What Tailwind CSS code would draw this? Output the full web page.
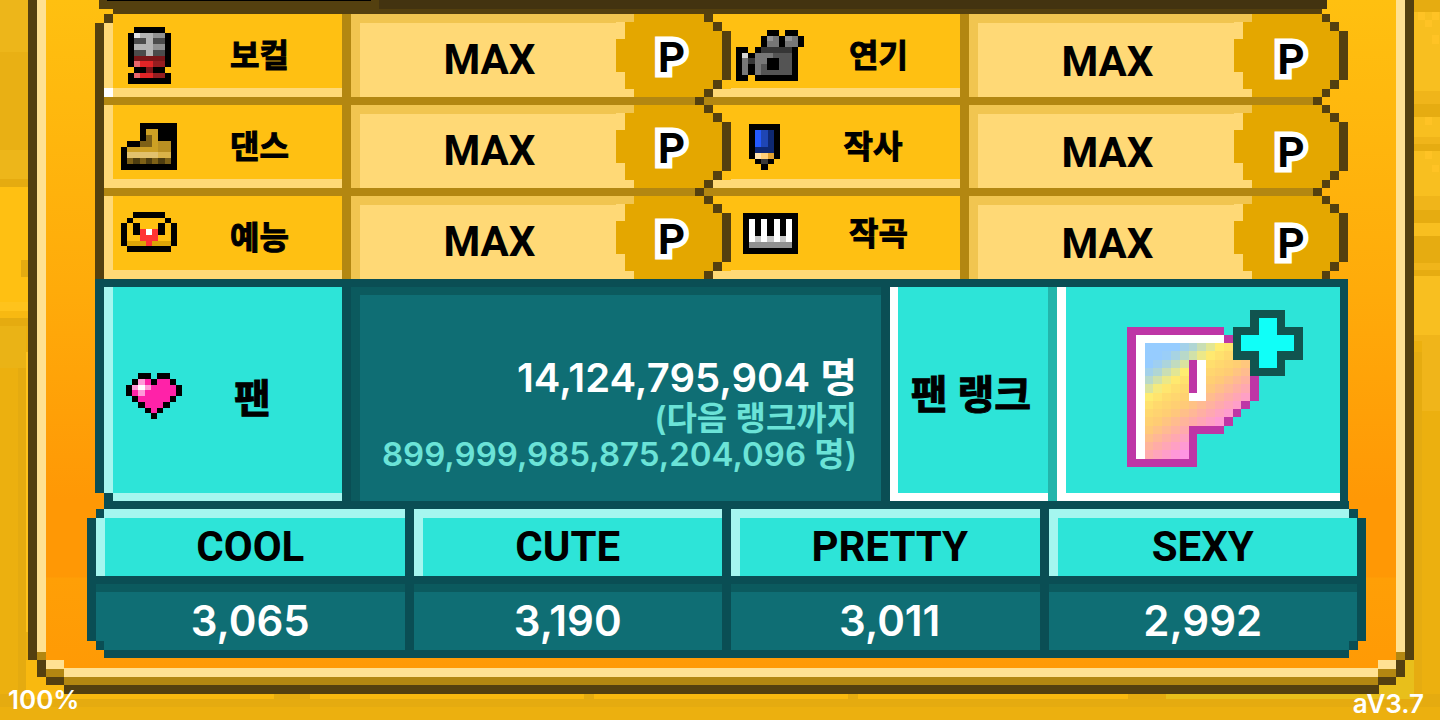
<!DOCTYPE html>
<html lang="ko">
<head>
<meta charset="utf-8">
<meta name="viewport" content="width=device-width, initial-scale=1">
<title>아이돌 스탯</title>
<script src="https://cdn.jsdelivr.net/npm/@tailwindcss/browser@4"></script>
</head>
<body class="relative min-h-screen overflow-x-hidden bg-[#ecb00f] font-[Roboto,'Noto_Sans_CJK_KR',sans-serif] font-bold text-black">

<!-- Brick backdrop -->
<div class="absolute inset-0 overflow-hidden" aria-hidden="true">
  <div class="absolute inset-x-0 top-[694px] h-[13px] bg-[#e5ab10]"></div>
  <div class="absolute inset-x-[26px] top-[660px] h-[39px] bg-[#f9b90f]"></div>
  <div class="absolute right-[26px] top-[660px] h-[39px] w-[248px] bg-[#e8bf1b]"></div>
  <svg class="absolute left-0 top-0" width="1440" height="720" shape-rendering="crispEdges">
    <path fill="#edb61a" d="M0 0h28v52H0zM0 150h28v29H0z"/>
    <path fill="#e9b014" d="M0 52h28v98H0z"/>
    <path fill="#edb61a" d="M7 151h7v7H7zM21 151h7v7h-7zM14 158h7v6h-7z"/>
    <path fill="#e5ab10" d="M0 179h28v8H0zM0 318h28v8H0zM18 350h8v349h-8zM274 694h36v8h-36zM584 694h10v8h-10zM848 694h10v8h-10zM1128 694h38v8h-38z"/>
    <path fill="#ffc012" d="M0 187h28v115H0z"/>
    <path fill="#e5ab10" d="M21 260h7v17h-7z"/>
    <path fill="#ffc31c" d="M0 302h28v9H0zM26 352h2v280h-2z"/>
    <path fill="#f8b912" d="M0 311h28v7H0z"/>
    <path fill="#eab316" d="M0 326h26v42H0z"/>
  </svg>
  <svg class="absolute right-0 top-0" width="26" height="720" shape-rendering="crispEdges">
    <path fill="#f8bf20" d="M0 0h26v341H0z"/>
    <path fill="#f0b51a" d="M0 91h26v13H0zM0 137h26v7H0zM0 196h26v14H0zM0 263h26v8H0zM0 335h26v6H0zM8 341h18v70H8z"/>
    <path fill="#e6ac11" d="M0 0h26v12H0zM0 104h26v13H0zM0 144h26v7H0zM0 210h26v13H0zM0 236h26v27H0zM0 270h26v6H0zM0 352h8v347H0z"/>
    <path fill="#ffc325" d="M4 12h7v8H4zM18 12h7v8h-7zM11 20h7v7h-7zM18 35h7v9h-7zM11 117h7v8h-7zM11 151h7v8h-7zM18 165h7v7h-7z"/>
  </svg>
</div>

<!-- Gold frame -->
<main class="relative ml-7 mr-[26px] border-x-[9px] border-b-[9px] border-[#54400f] bg-[#54400f] [clip-path:polygon(0_0,100%_0,100%_calc(100%-34px),calc(100%-9px)_calc(100%-34px),calc(100%-9px)_calc(100%-17px),calc(100%-18px)_calc(100%-17px),calc(100%-18px)_calc(100%-9px),calc(100%-35px)_calc(100%-9px),calc(100%-35px)_100%,36px_100%,36px_calc(100%-9px),18px_calc(100%-9px),18px_calc(100%-17px),9px_calc(100%-17px),9px_calc(100%-34px),0_calc(100%-34px))]">
  <div class="border-b-8 border-[#b38711]">
    <div class="border-x-[9px] border-b-[9px] border-[#ffe192] bg-[linear-gradient(#ffc010_0px,#ffab0a_290px,#ff9805_500px,#ff9805_577px,#ff9f06_578px,#ff9a05_100%)] pb-[10px]">

      <!-- Lower edge of the panel above -->
      <div class="ml-[53px] mr-[69px] flex h-[9px]">
        <div class="w-[280px] bg-[#54400f] px-2"><div class="h-px bg-black"></div></div>
        <div class="flex-1 bg-[#433310]"></div>
      </div>
      <div class="ml-[67px] mr-[74px] h-[5px] bg-[#54400f]"></div>

      <!-- Skills -->
      <section class="relative ml-[49px] mr-[48px] grid grid-cols-[627fr_617fr] border-l-[9px] border-[#54400f] [clip-path:polygon(9px_0,100%_0,100%_100%,0_100%,0_9px,9px_9px)]">
        <span class="absolute left-0 top-0 z-10 size-[9px] bg-[#54400f]"></span>
        <span class="absolute left-0 top-[74px] z-10 size-[9px] bg-white"></span>

        <div class="flex flex-col">
          <div class="grid h-[83px] grid-cols-[238fr_9px_265fr_115px]">
            <div class="flex items-center bg-[#ffc012] pl-[9px] pr-2 shadow-[inset_9px_0_#ffd976,inset_0_-9px_#ffd976]">
              <div class="flex w-[72px] justify-center"><svg data-sprite="mic" class="h-[57px] w-[43px]"></svg></div>
              <h2 class="flex-1 text-center text-[32px] leading-9 [-webkit-text-stroke:1px_black]">보컬</h2>
            </div>
            <div class="bg-[#b38711]"></div>
            <div class="flex items-center justify-center bg-[#ffd976] pl-3 pt-2 text-[42px] shadow-[inset_9px_9px_#f1c550]">MAX</div>
            <div class="grid place-items-center bg-[#ffc012]"><svg data-seal="inner" class="col-start-1 row-start-1 h-[83px] w-[115px]"></svg><span class="col-start-1 row-start-1 pr-1 pt-1 text-[42px] [-webkit-text-stroke:11px_white] [paint-order:stroke_fill] [stroke-linejoin:round]">P</span></div>
          </div>
          <div class="flex h-2 bg-[#b38711]"><div class="flex-1"></div><div class="mr-[27px] w-[9px] bg-[#54400f]"></div></div>
          <div class="grid h-[83px] grid-cols-[238fr_9px_265fr_115px]">
            <div class="flex items-center bg-[#ffc012] pl-[9px] pr-2 shadow-[inset_9px_0_#ffd976,inset_0_-9px_#ffd976]">
              <div class="flex w-[72px] justify-center"><svg data-sprite="shoe" class="h-[47px] w-[56px]"></svg></div>
              <h2 class="flex-1 text-center text-[32px] leading-9 [-webkit-text-stroke:1px_black]">댄스</h2>
            </div>
            <div class="bg-[#b38711]"></div>
            <div class="flex items-center justify-center bg-[#ffd976] pl-3 pt-2 text-[42px] shadow-[inset_9px_9px_#f1c550]">MAX</div>
            <div class="grid place-items-center bg-[#ffc012]"><svg data-seal="inner" class="col-start-1 row-start-1 h-[83px] w-[115px]"></svg><span class="col-start-1 row-start-1 pr-1 pt-1 text-[42px] [-webkit-text-stroke:11px_white] [paint-order:stroke_fill] [stroke-linejoin:round]">P</span></div>
          </div>
          <div class="flex h-2 bg-[#b38711]"><div class="flex-1"></div><div class="mr-[27px] w-[9px] bg-[#54400f]"></div></div>
          <div class="grid h-[83px] grid-cols-[238fr_9px_265fr_115px]">
            <div class="flex items-center bg-[#ffc012] pl-[9px] pr-2 shadow-[inset_9px_0_#ffd976,inset_0_-9px_#ffd976]">
              <div class="flex w-[72px] justify-center pb-3"><svg data-sprite="face" class="h-[40px] w-[56px]"></svg></div>
              <h2 class="flex-1 text-center text-[32px] leading-9 [-webkit-text-stroke:1px_black]">예능</h2>
            </div>
            <div class="bg-[#b38711]"></div>
            <div class="flex items-center justify-center bg-[#ffd976] pl-3 pt-2 text-[42px] shadow-[inset_9px_9px_#f1c550]">MAX</div>
            <div class="grid place-items-center bg-[#ffc012]"><svg data-seal="inner" class="col-start-1 row-start-1 h-[83px] w-[115px]"></svg><span class="col-start-1 row-start-1 pr-1 pt-1 text-[42px] [-webkit-text-stroke:11px_white] [paint-order:stroke_fill] [stroke-linejoin:round]">P</span></div>
          </div>
        </div>

        <div class="flex flex-col">
          <div class="grid h-[83px] grid-cols-[229fr_9px_265fr_114px]">
            <div class="flex items-center bg-[#ffc012] pr-3 shadow-[inset_0_-9px_#ffd976]">
              <div class="flex w-[78px] justify-center"><svg data-sprite="camera" class="h-[51px] w-[68px]"></svg></div>
              <h2 class="flex-1 text-center text-[32px] leading-9 [-webkit-text-stroke:1px_black]">연기</h2>
            </div>
            <div class="bg-[#b38711]"></div>
            <div class="flex items-center justify-center bg-[#ffd976] pl-3 pt-3 text-[42px] shadow-[inset_9px_9px_#f1c550]">MAX</div>
            <div class="grid place-items-center"><svg data-seal="outer" class="col-start-1 row-start-1 h-[83px] w-[114px]"></svg><span class="col-start-1 row-start-1 pt-2 text-[42px] [-webkit-text-stroke:11px_white] [paint-order:stroke_fill] [stroke-linejoin:round]">P</span></div>
          </div>
          <div class="flex h-2"><div class="flex-1 bg-[#b38711]"></div><div class="mr-[26px] w-[9px] bg-[#54400f]"></div></div>
          <div class="grid h-[83px] grid-cols-[229fr_9px_265fr_114px]">
            <div class="flex items-center bg-[#ffc012] pr-3 shadow-[inset_0_-9px_#ffd976]">
              <div class="flex w-[67px] justify-center"><svg data-sprite="pencil" class="h-[46px] w-[31px]"></svg></div>
              <h2 class="flex-1 text-center text-[32px] leading-9 [-webkit-text-stroke:1px_black]">작사</h2>
            </div>
            <div class="bg-[#b38711]"></div>
            <div class="flex items-center justify-center bg-[#ffd976] pl-3 pt-3 text-[42px] shadow-[inset_9px_9px_#f1c550]">MAX</div>
            <div class="grid place-items-center"><svg data-seal="outer" class="col-start-1 row-start-1 h-[83px] w-[114px]"></svg><span class="col-start-1 row-start-1 pt-3 text-[42px] [-webkit-text-stroke:11px_white] [paint-order:stroke_fill] [stroke-linejoin:round]">P</span></div>
          </div>
          <div class="flex h-2"><div class="flex-1 bg-[#b38711]"></div><div class="mr-[26px] w-[9px] bg-[#54400f]"></div></div>
          <div class="grid h-[83px] grid-cols-[229fr_9px_265fr_114px]">
            <div class="flex items-center bg-[#ffc012] pb-2 pr-3 shadow-[inset_0_-9px_#ffd976]">
              <div class="flex w-[78px] justify-center"><svg data-sprite="piano" class="h-[41px] w-[55px]"></svg></div>
              <h2 class="flex-1 text-center text-[32px] leading-9 [-webkit-text-stroke:1px_black]">작곡</h2>
            </div>
            <div class="bg-[#b38711]"></div>
            <div class="flex items-center justify-center bg-[#ffd976] pl-3 pt-3 text-[42px] shadow-[inset_9px_9px_#f1c550]">MAX</div>
            <div class="grid place-items-center"><svg data-seal="outer" class="col-start-1 row-start-1 h-[83px] w-[114px]"></svg><span class="col-start-1 row-start-1 pt-3 text-[42px] [-webkit-text-stroke:11px_white] [paint-order:stroke_fill] [stroke-linejoin:round]">P</span></div>
          </div>
        </div>
      </section>

      <!-- Fans -->
      <section class="relative ml-[49px] mr-[48px] grid min-h-[222px] grid-cols-[238fr_9px_530fr_9px_158fr_9px_283fr] border-l-[9px] border-r-8 border-t-8 border-[#0a4e54] bg-[#0a4e54] [clip-path:polygon(0_0,100%_0,100%_100%,9px_100%,9px_calc(100%-8px),0_calc(100%-8px))]">
        <span class="absolute bottom-0 left-0 z-10 h-2 w-[9px] bg-[#0a4e54]"></span>
        <div class="flex items-center bg-[#2de4d8] pl-[9px] pr-8 pt-1 shadow-[inset_9px_0_#a5f6ef,inset_0_-8px_#a5f6ef]">
          <div class="flex w-[82px] justify-center"><svg data-sprite="heart" class="h-[46px] w-[56px]"></svg></div>
          <h2 class="flex-1 pt-2 text-center text-[40px] [-webkit-text-stroke:1px_black]">팬</h2>
        </div>
        <div></div>
        <div class="flex flex-col items-end justify-center bg-[#0f6e74] pr-6 pt-10 text-right font-[Inter,'Noto_Sans_CJK_KR',sans-serif] font-semibold shadow-[inset_9px_8px_#0b5a5e]">
          <p class="text-[40px] leading-11 text-white">14,124,795,904 명</p>
          <p class="text-[33px] leading-9 text-[#6be3d7]">(다음 랭크까지<br>899,999,985,875,204,096 명)</p>
        </div>
        <div></div>
        <h2 class="flex items-center justify-center border-l-8 border-white bg-[#2de4d8] pr-1 pt-1 text-[40px] whitespace-nowrap shadow-[inset_0_-8px_white] [-webkit-text-stroke:1px_black]">팬 랭크</h2>
        <div class="bg-[#23b5ab]"></div>
        <div class="flex items-center justify-center border-l-[9px] border-white bg-[#2de4d8] pb-3 pl-6 shadow-[inset_0_-8px_white]">
          <button type="button" aria-label="팬 랭크 P+" class="cursor-pointer">
            <svg id="rank" class="h-[157px] w-[176px]" viewBox="0 0 20 19" preserveAspectRatio="none" shape-rendering="crispEdges">
              <path fill="#be36a6" d="M0 2h11v1h1v1h3v7h-1v1h-1v1h-1v1h-1v1H8v4H0z"/>
              <path fill="#fff" d="M1 3h10v1H2v14H1z"/>
              <g id="rank-shine"></g>
              <path fill="#fff" d="M8 6h1v5H7v-1h1z"/>
              <path fill="#be36a6" d="M7 6h1v4H7z"/>
              <path fill="#11544f" d="M14 0h4v2h2v4h-2v2h-4V6h-2V2h2z"/>
              <path fill="#10fff8" d="M15 1h2v2h2v2h-2v2h-2V5h-2V3h2z"/>
            </svg>
          </button>
        </div>
      </section>

      <!-- Charm stats -->
      <section class="relative ml-[41px] mr-[30px] bg-[#0a4e54] [clip-path:polygon(17px_0,calc(100%-17px)_0,calc(100%-17px)_8px,calc(100%-8px)_8px,calc(100%-8px)_17px,100%_17px,100%_calc(100%-17px),calc(100%-8px)_calc(100%-17px),calc(100%-8px)_calc(100%-8px),calc(100%-17px)_calc(100%-8px),calc(100%-17px)_100%,17px_100%,17px_calc(100%-8px),9px_calc(100%-8px),9px_calc(100%-17px),0_calc(100%-17px),0_17px,9px_17px,9px_8px,17px_8px)]">
        <table class="w-full table-fixed border-separate border-spacing-x-[9px] border-spacing-y-2 text-center text-[42px] leading-none">
          <thead>
            <tr class="h-[67px] bg-[#2de4d8]">
              <th scope="col" class="border-l-[9px] border-t-[9px] border-[#a5f6ef] bg-[#2de4d8] py-0 pl-0 pr-[9px]">COOL</th>
              <th scope="col" class="border-l-[9px] border-t-[9px] border-[#a5f6ef] bg-[#2de4d8] py-0 pl-0 pr-[9px]">CUTE</th>
              <th scope="col" class="border-l-[9px] border-t-[9px] border-[#a5f6ef] bg-[#2de4d8] p-0">PRETTY</th>
              <th scope="col" class="border-l-[9px] border-t-[9px] border-[#a5f6ef] bg-[#2de4d8] py-0 pl-0 pr-[9px]">SEXY</th>
            </tr>
          </thead>
          <tbody class="font-[Inter,sans-serif] font-semibold text-white">
            <tr class="h-[66px]">
              <td class="border-t-8 border-[#0b5a5e] bg-[#0f6e74] p-0">3,065</td>
              <td class="border-t-8 border-[#0b5a5e] bg-[#0f6e74] p-0">3,190</td>
              <td class="border-t-8 border-[#0b5a5e] bg-[#0f6e74] py-0 pl-[9px] pr-0">3,011</td>
              <td class="border-t-8 border-[#0b5a5e] bg-[#0f6e74] p-0">2,992</td>
            </tr>
          </tbody>
        </table>
        <span class="absolute left-[9px] top-2 h-[9px] w-2 bg-[#0a4e54]"></span>
        <span class="absolute right-2 top-2 size-[9px] bg-[#0a4e54]"></span>
        <span class="absolute bottom-2 left-[9px] h-[9px] w-2 bg-[#0a4e54]"></span>
        <span class="absolute bottom-2 right-2 size-[9px] bg-[#0a4e54]"></span>
      </section>
    </div>
  </div>
  <svg data-corner class="absolute -bottom-[9px] -left-[9px] h-[42px] w-9"></svg>
  <svg data-corner class="absolute -bottom-[9px] -right-[9px] h-[42px] w-9 -scale-x-100"></svg>
</main>

<footer class="absolute inset-x-0 bottom-0 flex items-end justify-between pl-2 pr-4 font-[Inter,sans-serif] text-[26px] leading-8 font-semibold text-white">
  <span class="pb-1">100%</span>
  <span>aV3.7</span>
</footer>

<script>
const NS = 'http://www.w3.org/2000/svg';
function rect(parent, x, y, w, h, fill) {
  const r = document.createElementNS(NS, 'rect');
  Object.entries({ x, y, width: w, height: h, fill }).forEach(([k, v]) => r.setAttribute(k, v));
  parent.appendChild(r);
}
function canvas(svg, w, h) {
  svg.setAttribute('viewBox', `0 0 ${w} ${h}`);
  svg.setAttribute('preserveAspectRatio', 'none');
  svg.setAttribute('shape-rendering', 'crispEdges');
  svg.setAttribute('aria-hidden', 'true');
}

// Pixel sprites: one character per pixel, "." is transparent.
const sprites = {
  mic: [{ k:'#000', w:'#e4e4e4', g:'#b3b3b3', d:'#919191', D:'#4b4b4b', m:'#7a1518', p:'#e9666a', r:'#e02426', n:'#951d20' },
    '.kkkkk.', 'kwggddk', 'kDDgDDk', 'kgggddk', 'kDDgDDk', 'kmmmmmk', 'kprrnnk', '.kkmkk.', 'kprrnnk', 'kkkkkkk'],
  shoe: [{ k:'#000', g:'#cda024', h:'#7d6016', m:'#ba9022', l:'#e1c16d', n:'#dab349', q:'#4d3c0f' },
    '...kkkkkk', '...kggkkk', '...khgkkk', '.kkhhgmmk', 'kgggggmmk', 'klllllnnk', 'khqhqhqhk', 'kkkkkkkkk'],
  face: [{ k:'#000', r:'#ff3434', w:'#fff', y:'#dca407' },
    '..kkkkk..', '.k.....k.', 'k.k...k.k', 'k.krwrk.k', 'k..rrr..k', 'kyyyryyyk', '.kkkkkkk.'],
  camera: [{ k:'#000', a:'#939393', b:'#777', D:'#363636', e:'#545454', w:'#d4d4d4' },
    '.....kk.kk.', '....kabkabk', '....kbbkbbk', 'kk.kDDDDDk.', 'kwkbbbeeek.', 'kbDbbkkeek.', 'kbkbekkeek.', 'kbkbeeeeek.', 'kk.kkkkkkk.'],
  pencil: [{ k:'#000', b:'#245aff', c:'#1f46b4', n:'#0e2872', l:'#ffe2ae', o:'#ffcf78', p:'#e1a231', g:'#3a3a3a' },
    'kkkkk', 'kbcnk', 'kbcnk', 'kbcnk', 'knnnk', 'klopk', '.kgk.', '..k..'],
  piano: [{ k:'#000', w:'#fff', g:'#c8c8c8', d:'#919191' },
    'kkkkkkkkk', 'kwkwkwkwk', 'kwkwkwkwk', 'kwkwkwkwk', 'kwgwgwgwk', 'kdddddddk', 'kkkkkkkkk'],
  heart: [{ k:'#000', p:'#ff22a8', l:'#ff9ad8', w:'#fff' },
    '..kk.kk..', '.klpkppk.', 'klwlppppk', 'kplpppppk', '.kpppppk.', '..kpppk..', '...kpk...', '....k....']
};
document.querySelectorAll('[data-sprite]').forEach(svg => {
  const [colors, ...rows] = sprites[svg.dataset.sprite];
  canvas(svg, rows[0].length, rows.length);
  rows.forEach((row, y) => [...row].forEach((c, x) => { if (c !== '.') rect(svg, x, y, 1, 1, colors[c]); }));
});

// Rounded seal that closes each skill row.
const leftEdge = [2, 1, 1, 0, 0, 0, 0, 1, 1, 2];
const rightEdge = [10, 11, 12, 12, 12, 12, 12, 12, 11, 10];
document.querySelectorAll('[data-seal]').forEach(svg => {
  canvas(svg, 13, 10);
  if (svg.dataset.seal === 'inner') rect(svg, 11, 9, 2, 1, '#ffd976');
  leftEdge.forEach((l, y) => {
    if (l) rect(svg, 0, y, l, 1, y === 0 ? '#f1c550' : '#ffd976');
    rect(svg, l, y, rightEdge[y] - l, 1, '#e4a700');
    rect(svg, rightEdge[y], y, 1, 1, '#54400f');
  });
});

// Stepped bottom corners of the frame.
document.querySelectorAll('[data-corner]').forEach(svg => {
  canvas(svg, 4, 5);
  [['#ff9b05', 2, 0, 2, 1], ['#54400f', 0, 0, 1, 1], ['#b38711', 1, 0, 1, 1], ['#54400f', 1, 1, 1, 2],
   ['#ffe192', 2, 1, 2, 1], ['#b38711', 2, 2, 2, 1], ['#54400f', 2, 3, 2, 1]]
    .forEach(([f, x, y, w, h]) => rect(svg, x, y, w, h, f));
});

// Holographic fill of the rank letter.
const stops = [[3, 150, 204, 255], [5, 176, 214, 212], [7, 226, 230, 148], [8, 255, 236, 112], [10, 255, 219, 108], [13, 255, 204, 116], [17, 255, 172, 168], [21, 255, 148, 226]];
function shine(t) {
  if (t <= 3) return 'rgb(150,204,255)';
  for (let i = 1; i < stops.length; i++) {
    if (t <= stops[i][0]) {
      const a = stops[i - 1], b = stops[i], f = (t - a[0]) / (b[0] - a[0]);
      return `rgb(${[1, 2, 3].map(n => Math.round(a[n] + (b[n] - a[n]) * f))})`;
    }
  }
  return 'rgb(255,148,226)';
}
const fillEnd = [12, 13, 14, 14, 14, 14, 14, 13, 12, 11, 7, 7, 7, 7];
const group = document.getElementById('rank-shine');
fillEnd.forEach((end, i) => {
  for (let x = 2; x < end; x++) rect(group, x, 4 + i, 1, 1, shine((x - 2) + i * 1.33));
});
</script>
</body>
</html>
